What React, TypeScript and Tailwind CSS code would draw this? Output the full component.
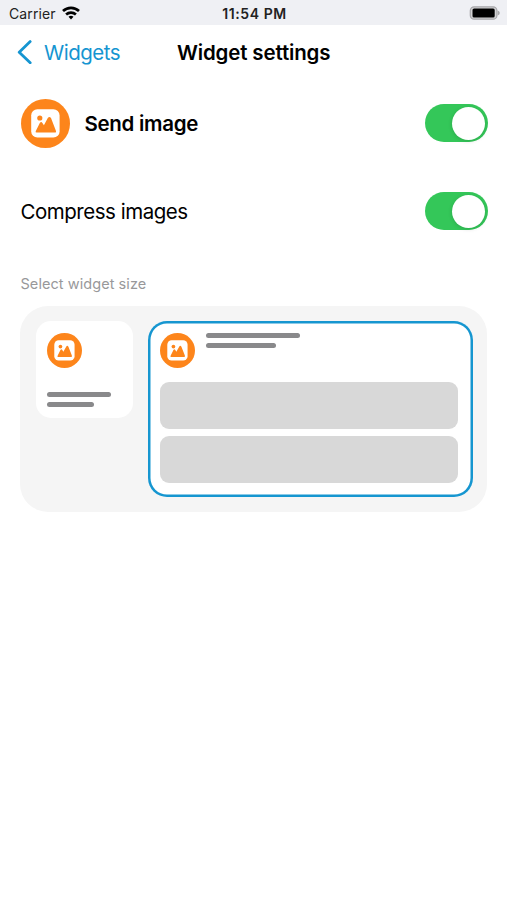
function ImageBadge({ className }: { className: string }) {
  return (
    <svg viewBox="0 0 49 49" className={className} aria-hidden="true">
      <circle cx="24.5" cy="24.5" r="24.5" fill="#fd851b" />
      <rect x="10.2" y="10.2" width="28.4" height="28.4" rx="6.2" fill="#fff" />
      <circle cx="18.8" cy="19" r="2.6" fill="#fd851b" />
      <path
        d="M14.7 32.2 18.8 23.9Q20.2 21.9 21.4 23.9L22.9 26.3 26.8 19.1Q28.4 16.8 30 19.1L34.8 31.4Q35.6 33.6 33.6 33.6H15.6Q14.2 33.6 14.7 32.2Z"
        fill="#fd851b"
      />
    </svg>
  )
}

function Toggle() {
  return (
    <button
      type="button"
      role="switch"
      aria-checked="true"
      className="flex h-[38px] w-[63px] items-center justify-end rounded-full bg-[#34c759] pr-[3px]"
    >
      <span className="size-[33px] rounded-full bg-white shadow-[0_1px_4px_rgba(0,0,0,0.15)]" />
    </button>
  )
}

function StatusBar() {
  return (
    <div className="grid h-[25px] grid-cols-3 items-center bg-[#eff0f4] pt-[2px] pr-[7px] pl-[9px] text-[14px] text-[#222]">
      <div className="flex items-center gap-[6px]">
        <span className="tracking-[0.1px]">Carrier</span>
        <svg viewBox="0 0 18 14" className="-mt-px h-[14px] w-[18px]" fill="none" stroke="#000" strokeWidth="2.7">
          <path d="M1 5.1C5.5 .9 12.5.9 17 5.1" />
          <path d="M4.1 8.4C6.9 5.9 11.1 5.9 13.9 8.4" />
          <path d="M6.5 10.8Q9 8.8 11.5 10.8L9 13.4Z" fill="#000" stroke="none" />
        </svg>
      </div>
      <span className="text-center font-semibold tracking-[0.6px] whitespace-nowrap">11:54 PM</span>
      <svg viewBox="0 0 31 14" className="-mt-px h-[14px] w-[31px] justify-self-end">
        <rect x="1.3" y=".8" width="26.6" height="12.4" rx="3.8" fill="#d2d2d4" stroke="#a7a7aa" strokeWidth="1.2" />
        <rect x="3.5" y="2.5" width="22.2" height="9" rx="1.6" fill="#000" />
        <path d="M28.6 4.6Q30.8 5.3 30.8 7T28.6 9.4Z" fill="#a7a7aa" />
      </svg>
    </div>
  )
}

export default function App() {
  return (
    <main className="min-h-[900px] w-[507px] bg-white font-['Inter','Liberation_Sans',sans-serif] text-black">
      <StatusBar />

      <header className="grid h-[54px] grid-cols-[177px_153px_1fr] items-center">
        <a className="flex items-center gap-[12px] pl-[17px] text-[20.5px] tracking-[-0.5px] text-[#1595d1]">
          <svg viewBox="0 0 15 24" className="h-[24px] w-[15px]" fill="none" stroke="currentColor" strokeWidth="2.8">
            <path d="M13.2 1.6 2.2 12.2 13.2 22.8" strokeLinecap="round" strokeLinejoin="round" />
          </svg>
          <span className="pt-[2px]">Widgets</span>
        </a>
        <h1 className="pt-[2px] text-[20.5px] font-semibold tracking-[-0.15px] whitespace-nowrap">Widget settings</h1>
      </header>

      <section className="flex h-[88px] items-center gap-[15px] pr-[19px] pl-[20.5px]">
        <ImageBadge className="size-[49px]" />
        <h2 className="flex-1 pt-[2px] text-[20.5px] font-semibold tracking-[-0.3px]">Send image</h2>
        <Toggle />
      </section>

      <section className="flex h-[88px] items-center justify-between pr-[19px] pl-[20.5px]">
        <span className="pt-[2px] text-[20.5px] tracking-[-0.48px]">Compress images</span>
        <Toggle />
      </section>

      <section className="px-[20px] pt-[18px]">
        <h3 className="h-[33px] pl-[0.5px] text-[14.5px] leading-[21px] tracking-[0.06px] text-[#98989a]">
          Select widget size
        </h3>

        <div className="flex h-[206px] w-[467px] items-start gap-[15px] rounded-[28px] bg-[#f5f5f5] pt-[15px] pl-[16px]">
          {/* Small */}
          <div className="flex h-[97px] w-[97px] flex-col rounded-[15px] bg-white pt-[12px] pl-[11px]">
            <ImageBadge className="size-[35px]" />
            <div className="mt-[24px] h-[5px] w-[64px] rounded-full bg-[#89898b]" />
            <div className="mt-[5px] h-[5px] w-[47px] rounded-full bg-[#89898b]" />
          </div>

          {/* Medium, selected */}
          <div className="h-[176px] w-[325px] rounded-[19px] bg-white pt-[12px] pl-[12px] inset-ring-[2.5px] inset-ring-[#1696d0]">
            <div className="flex gap-[11px]">
              <ImageBadge className="size-[35px]" />
              <div>
                <div className="h-[5px] w-[94px] rounded-full bg-[#89898b]" />
                <div className="mt-[5px] h-[5px] w-[70px] rounded-full bg-[#89898b]" />
              </div>
            </div>
            <div className="mt-[14px] h-[47px] w-[298px] rounded-[9px] bg-[#d8d8d8]" />
            <div className="mt-[7px] h-[47px] w-[298px] rounded-[9px] bg-[#d8d8d8]" />
          </div>
        </div>
      </section>
    </main>
  )
}
